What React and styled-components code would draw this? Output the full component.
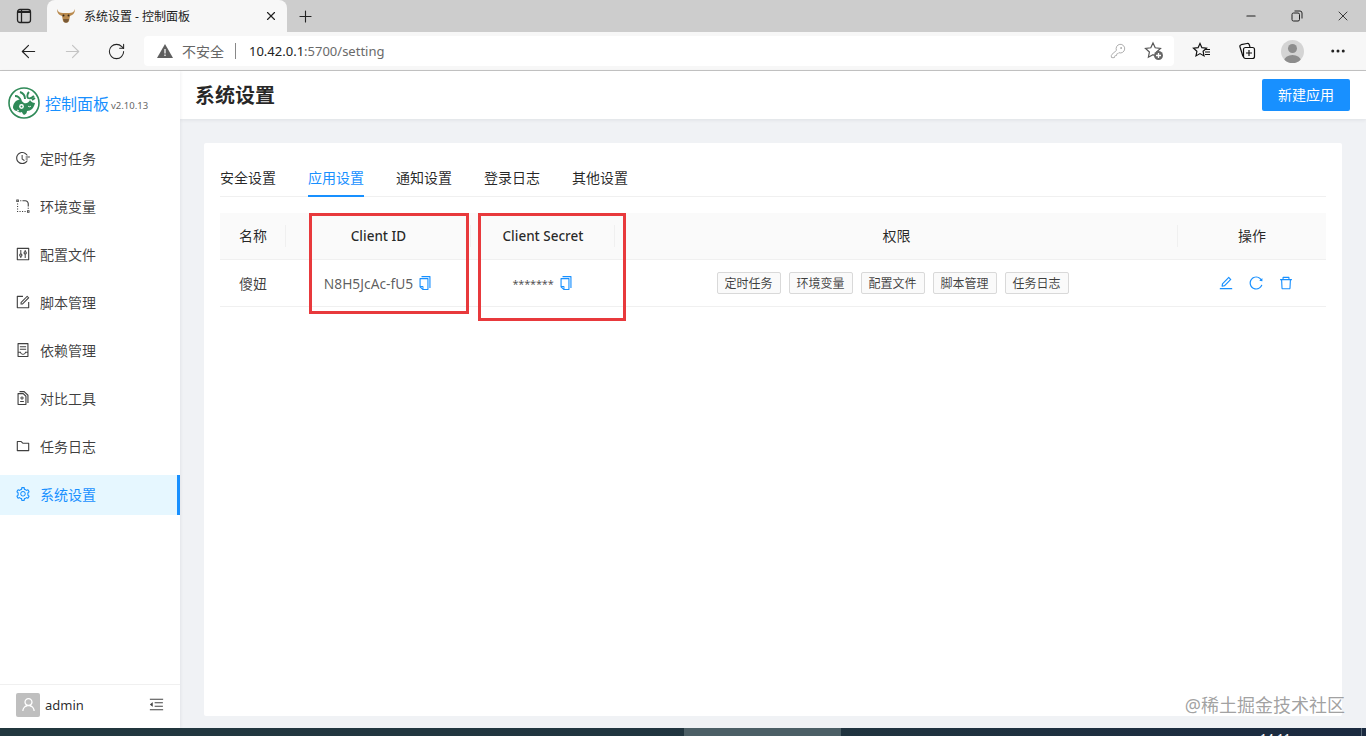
import styled, { createGlobalStyle } from 'styled-components'
import { ArrowLeft, ArrowRight, RotateCw, Minus, X, Plus, KeyRound, MoreHorizontal } from 'lucide-react'
import {
  AiOutlineFieldTime, AiOutlineRadiusSetting, AiOutlineControl, AiOutlineForm, AiOutlineContainer,
  AiOutlineDiff, AiOutlineFolder, AiOutlineSetting, AiOutlineCopy, AiOutlineEdit, AiOutlineReload,
  AiOutlineDelete, AiOutlineUser, AiOutlineMenuFold,
} from 'react-icons/ai'

const GlobalStyle = createGlobalStyle`
html,body{margin:0;padding:0;height:100%;overflow:hidden;}
body{font-family:"Noto Sans","Noto Sans CJK SC",sans-serif;color:rgba(0,0,0,0.85);font-size:14px;}
*{box-sizing:border-box;}
`

const menuItems = [
  { label: '定时任务', icon: AiOutlineFieldTime },
  { label: '环境变量', icon: AiOutlineRadiusSetting },
  { label: '配置文件', icon: AiOutlineControl },
  { label: '脚本管理', icon: AiOutlineForm },
  { label: '依赖管理', icon: AiOutlineContainer },
  { label: '对比工具', icon: AiOutlineDiff },
  { label: '任务日志', icon: AiOutlineFolder },
  { label: '系统设置', icon: AiOutlineSetting, active: true },
]
const tabs = ['安全设置', '应用设置', '通知设置', '登录日志', '其他设置']
const scopes = ['定时任务', '环境变量', '配置文件', '脚本管理', '任务日志']

const SidebarToggleIcon = () => (
  <svg width="16" height="16" viewBox="0 0 16 16">
    <rect x="1.500" y="1.500" width="13" height="13" rx="2.500" fill="none" stroke="#222" strokeWidth="1.300" />
    <path d="M2 4h12" stroke="#222" strokeWidth="2" />
    <path d="M5.500 2v12" stroke="#222" strokeWidth="1.300" />
  </svg>
)

const BullIcon = () => (
  <svg width="20" height="18" viewBox="0 0 20 18">
    <path d="M1 2c1 3 3 4 6 4h6c3 0 5-1 6-4 0 4-2 6-5 7l-1 5c-1 2-5 2-6 0L6 9C3 8 1 6 1 2z" fill="#b98a4e" />
    <path d="M7 12h6l-1 3c-1 1-3 1-4 0z" fill="#7a5a36" />
    <circle cx="7.500" cy="8.500" r="1" fill="#3a2a1a" />
    <circle cx="12.500" cy="8.500" r="1" fill="#3a2a1a" />
  </svg>
)

const LogoIcon = () => (
  <svg width="32" height="32" viewBox="0 0 32 32">
    <circle cx="16" cy="16" r="15" fill="#fff" stroke="#2f8a58" strokeWidth="1.600" />
    <path d="M5 21c0-4 2-7 5-8 3-1 4 2 6 3 3 1 5-1 6-3 1 2 3 3 5 3-1 5-4 8-8 8 0 2-1 3-3 4-1-1-2-2-2-3-2 1-4 0-5-1-2 0-3-1-4-3z" fill="#2f8a58" />
    <path d="M7 9c3 0 5 2 6 5M12 5c3 1 5 4 5 7M21 5c-2 2-2 5-1 6 2 1 4 0 6-2M24 13l3-2" fill="none" stroke="#2f8a58" strokeWidth="1.900" />
    <circle cx="13.500" cy="19.500" r="2.400" fill="#fff" />
    <circle cx="13.500" cy="19.500" r="1" fill="#2f8a58" />
    <path d="M20 19c1 1 2 1 3 0M9 23l2 1" stroke="#fff" strokeWidth="1" fill="none" />
  </svg>
)

const AddFavIcon = () => (
  <svg width="20" height="20" viewBox="0 0 20 20">
    <path d="M9 2l2.200 4.800 5.300.6-3.900 3.600 1 5.200L9 13.700l-4.600 2.500 1-5.200L1.500 7.400l5.300-.6z" fill="none" stroke="#555" strokeWidth="1.200" />
    <circle cx="14.500" cy="14.500" r="4.500" fill="#666" />
    <path d="M14.500 12v5M12 14.500h5" stroke="#fff" strokeWidth="1.300" />
  </svg>
)

const FavListIcon = () => (
  <svg width="20" height="20" viewBox="0 0 20 20">
    <path d="M8 2.500l1.900 4.200 4.600.5-3.400 3.100.9 4.600L8 12.600l-4 2.300.9-4.600L1.500 7.200l4.600-.5z" fill="none" stroke="#111" strokeWidth="1.200" />
    <path d="M13 8.500h5M13 11h5M13 13.500h5" stroke="#111" strokeWidth="1.200" />
  </svg>
)

const CollectionsIcon = () => (
  <svg width="20" height="20" viewBox="0 0 20 20">
    <path d="M6 15.500L3 6c-.3-1 .2-2 1.200-2.300L10 2.500c1-.2 1.800.2 2.200 1L13 6" fill="none" stroke="#111" strokeWidth="1.200" />
    <rect x="6.500" y="6.500" width="11" height="11" rx="2" fill="#f7f7f7" stroke="#111" strokeWidth="1.200" />
    <path d="M12 9v6M9 12h6" stroke="#111" strokeWidth="1.200" />
  </svg>
)

const RestoreIcon = () => (
  <svg width="12" height="12" viewBox="0 0 12 12">
    <rect x="1" y="3" width="7.500" height="8" rx="1.500" fill="none" stroke="#222" />
    <path d="M3.500 1h5.500A2 2 0 0 1 11 3v5.500" fill="none" stroke="#222" />
  </svg>
)

const WarnIcon = () => (
  <svg width="16" height="14" viewBox="0 0 16 14">
    <path d="M8 0l8 14H0z" fill="#5f5f5f" />
    <path d="M8 5v4.500M8 10.500v1.500" stroke="#f7f7f7" strokeWidth="1.300" />
  </svg>
)

const App = () => (
  <Page>
    <GlobalStyle />
    <TabStrip>
      <StripButton $width={47}><SidebarToggleIcon /></StripButton>
      <BrowserTab>
        <BullIcon />
        <TabTitle>系统设置 - 控制面板</TabTitle>
        <X size={14} color="#222" />
      </BrowserTab>
      <StripButton $width={36}><Plus size={19} strokeWidth={1.400} color="#222" /></StripButton>
      <WindowControls>
        <WindowButton><Minus size={14} color="#222" /></WindowButton>
        <WindowButton><RestoreIcon /></WindowButton>
        <WindowButton><X size={16} strokeWidth={1.300} color="#222" /></WindowButton>
      </WindowControls>
    </TabStrip>
    <Toolbar>
      <NavButton><ArrowLeft size={21} strokeWidth={1.300} color="#222" /></NavButton>
      <NavButton><ArrowRight size={21} strokeWidth={1.300} color="#c4c4c4" /></NavButton>
      <NavButton><RotateCw size={19} strokeWidth={1.300} color="#222" /></NavButton>
      <AddressBar>
        <WarnIcon />
        <Insecure>不安全</Insecure>
        <AddressDivider />
        <Url><b>10.42.0.1</b>:5700/setting</Url>
        <AddressTools>
          <KeyRound size={16} strokeWidth={1.200} color="#999" />
          <AddFavIcon />
        </AddressTools>
      </AddressBar>
      <BarTools>
        <FavListIcon />
        <CollectionsIcon />
        <Avatar><AvatarHead /><AvatarBody /></Avatar>
        <MoreHorizontal size={18} color="#222" />
      </BarTools>
    </Toolbar>
    <Body>
      <Sidebar>
        <Brand>
          <LogoIcon />
          <BrandName>控制面板</BrandName>
          <BrandVersion>v2.10.13</BrandVersion>
        </Brand>
        <Menu>
          {menuItems.map(({ label, icon: Icon, active }) => (
            <MenuItem key={label} $active={active}>
              <Icon size={16} />
              <span>{label}</span>
            </MenuItem>
          ))}
        </Menu>
        <SidebarFooter>
          <UserSquare><AiOutlineUser size={17} color="#fff" /></UserSquare>
          <UserName>admin</UserName>
          <AiOutlineMenuFold size={17} color="#444" />
        </SidebarFooter>
      </Sidebar>
      <Main>
        <PageHeader>
          <PageTitle>系统设置</PageTitle>
          <PrimaryButton>新建应用</PrimaryButton>
        </PageHeader>
        <ContentArea>
          <Card>
            <TabList>
              {tabs.map((tab) => (
                <TabItem key={tab} $active={tab === '应用设置'}>{tab}</TabItem>
              ))}
            </TabList>
            <TableWrap>
              <HeadRow>
                <HeadCell>名称</HeadCell>
                <HeadCell $latin>Client ID</HeadCell>
                <HeadCell $latin>Client Secret</HeadCell>
                <HeadCell>权限</HeadCell>
                <HeadCell $last>操作</HeadCell>
              </HeadRow>
              <BodyRow>
                <BodyCell>傻妞</BodyCell>
                <BodyCell><ClientId>N8H5JcAc-fU5</ClientId><CopyMark><AiOutlineCopy size={16} /></CopyMark></BodyCell>
                <BodyCell><Stars>*******</Stars><CopyMark><AiOutlineCopy size={16} /></CopyMark></BodyCell>
                <BodyCell>
                  <TagList>
                    {scopes.map((s) => <Tag key={s}>{s}</Tag>)}
                  </TagList>
                </BodyCell>
                <BodyCell>
                  <Actions>
                    <AiOutlineEdit size={16} />
                    <AiOutlineReload size={16} />
                    <AiOutlineDelete size={16} />
                  </Actions>
                </BodyCell>
              </BodyRow>
              <RedBox $left={89} $width={160} $height={101} />
              <RedBox $left={258} $width={148} $height={108} />
            </TableWrap>
          </Card>
          <Watermark>@稀土掘金技术社区</Watermark>
        </ContentArea>
      </Main>
    </Body>
    <Taskbar>
      <TaskbarActive />
      <TaskbarClock>14:11</TaskbarClock>
      <TaskbarEdge />
    </Taskbar>
  </Page>
)

const Page = styled.div`
  width: 1366px;
  height: 736px;
  display: flex;
  flex-direction: column;
  overflow: hidden;
  background: #fff;
`
const TabStrip = styled.div`
  height: 32px;
  flex: none;
  display: flex;
  align-items: stretch;
  background: #cdcdcd;
`
const StripButton = styled.div`
  width: ${(p) => p.$width}px;
  display: flex;
  align-items: center;
  justify-content: center;
`
const BrowserTab = styled.div`
  width: 240px;
  display: flex;
  align-items: center;
  padding: 0 9px;
  background: #f7f7f7;
  border-radius: 8px 8px 0 0;
`
const TabTitle = styled.span`
  flex: 1;
  margin-left: 8px;
  font-size: 12px;
  color: #222;
`
const WindowControls = styled.div`
  margin-left: auto;
  display: flex;
`
const WindowButton = styled.div`
  width: 46px;
  display: flex;
  align-items: center;
  justify-content: center;
`
const Toolbar = styled.div`
  height: 39px;
  flex: none;
  display: flex;
  align-items: center;
  padding-left: 6px;
  background: #f7f7f7;
  border-bottom: 1px solid #c4c4c4;
`
const NavButton = styled.div`
  width: 44px;
  display: flex;
  justify-content: center;
`
const AddressBar = styled.div`
  width: 1030px;
  height: 30px;
  margin-left: 6px;
  display: flex;
  align-items: center;
  padding: 0 10px 0 13px;
  background: #fff;
  border-radius: 4px;
`
const Insecure = styled.span`
  margin-left: 9px;
  font-size: 14px;
  color: #666;
`
const AddressDivider = styled.span`
  width: 1px;
  height: 16px;
  margin: 0 13px 0 11px;
  background: #888;
`
const Url = styled.span`
  font-size: 13px;
  color: #6a6a6a;
  b {
    font-weight: 400;
    color: #222;
  }
`
const AddressTools = styled.div`
  margin-left: auto;
  display: flex;
  align-items: center;
  gap: 18px;
`
const BarTools = styled.div`
  flex: 1;
  display: flex;
  align-items: center;
  justify-content: space-between;
  padding: 0 19px 0 18px;
`
const Avatar = styled.div`
  position: relative;
  width: 23px;
  height: 23px;
  border-radius: 50%;
  background: #d4d4d4;
  overflow: hidden;
`
const AvatarHead = styled.div`
  position: absolute;
  left: 7px;
  top: 4px;
  width: 9px;
  height: 9px;
  border-radius: 50%;
  background: #8d8d8d;
`
const AvatarBody = styled.div`
  position: absolute;
  left: 3px;
  top: 15px;
  width: 17px;
  height: 12px;
  border-radius: 50%;
  background: #8d8d8d;
`
const Body = styled.div`
  flex: 1;
  min-height: 0;
  display: flex;
`
const Sidebar = styled.aside`
  width: 180px;
  flex: none;
  display: flex;
  flex-direction: column;
  background: #fff;
  box-shadow: 1px 0 3px rgba(0, 21, 41, 0.06);
  z-index: 2;
`
const Brand = styled.div`
  height: 64px;
  flex: none;
  display: flex;
  align-items: center;
  padding: 0 0 0 8px;
`
const BrandName = styled.span`
  margin-left: 5px;
  font-size: 16px;
  color: #1890ff;
`
const BrandVersion = styled.span`
  margin: 5px 0 0 2px;
  font-size: 9.5px;
  color: #666;
`
const Menu = styled.nav`
  flex: 1;
  display: flex;
  flex-direction: column;
  gap: 8px;
  padding-top: 4px;
`
const MenuItem = styled.div`
  height: 40px;
  display: flex;
  align-items: center;
  gap: 9px;
  padding: 0 0 2px 15px;
  font-size: 14px;
  color: ${(p) => (p.$active ? '#1890ff' : 'rgba(0,0,0,0.75)')};
  background: ${(p) => (p.$active ? '#e6f7ff' : 'transparent')};
  border-right: ${(p) => (p.$active ? '3px solid #1890ff' : '0')};
`
const SidebarFooter = styled.div`
  height: 44px;
  flex: none;
  display: flex;
  align-items: center;
  padding: 0 15px 4px 16px;
  border-top: 1px solid #f0f0f0;
`
const UserSquare = styled.div`
  width: 24px;
  height: 24px;
  display: flex;
  align-items: center;
  justify-content: center;
  background: #bfbfbf;
  border-radius: 2px;
`
const UserName = styled.span`
  flex: 1;
  margin-left: 5px;
  font-size: 13px;
`
const Main = styled.main`
  flex: 1;
  min-width: 0;
  display: flex;
  flex-direction: column;
  background: #f0f2f5;
`
const PageHeader = styled.header`
  height: 48px;
  flex: none;
  display: flex;
  align-items: center;
  justify-content: space-between;
  padding: 0 16px 0 15px;
  background: #fff;
  box-shadow: 0 1px 4px rgba(0, 21, 41, 0.08);
`
const PageTitle = styled.h1`
  margin: 0 0 2px;
  font-size: 20px;
  font-weight: 600;
  color: rgba(0, 0, 0, 0.85);
`
const PrimaryButton = styled.button`
  width: 88px;
  height: 32px;
  padding: 0 0 2px;
  border: 0;
  border-radius: 2px;
  background: #1890ff;
  color: #fff;
  font: inherit;
  font-size: 14px;
`
const ContentArea = styled.div`
  position: relative;
  flex: 1;
  min-height: 0;
  padding: 24px 24px 12px;
`
const Card = styled.section`
  height: 100%;
  padding: 16px 16px 0;
  background: #fff;
  border-radius: 2px;
`
const TabList = styled.div`
  height: 38px;
  display: flex;
  gap: 32px;
  border-bottom: 1px solid #f0f0f0;
`
const TabItem = styled.div`
  height: 38px;
  padding-top: 8px;
  font-size: 14px;
  color: ${(p) => (p.$active ? '#1890ff' : 'rgba(0,0,0,0.85)')};
  border-bottom: 2px solid ${(p) => (p.$active ? '#1890ff' : 'transparent')};
`
const TableWrap = styled.div`
  position: relative;
  margin-top: 16px;
`
const columns = 'grid-template-columns: 66px 185px 144px 563px 148px;'
const HeadRow = styled.div`
  display: grid;
  ${columns}
  height: 47px;
  background: #fafafa;
  border-bottom: 1px solid #f0f0f0;
`
const HeadCell = styled.div`
  position: relative;
  display: flex;
  align-items: center;
  justify-content: center;
  padding-bottom: ${(p) => (p.$latin ? '0' : '2px')};
  font-size: ${(p) => (p.$latin ? '13.5px' : '14px')};
  font-weight: ${(p) => (p.$latin ? 500 : 400)};
  &::after {
    content: '';
    display: ${(p) => (p.$last ? 'none' : 'block')};
    position: absolute;
    right: 0;
    top: 12px;
    bottom: 12px;
    width: 1px;
    background: #f0f0f0;
  }
`
const BodyRow = styled.div`
  display: grid;
  ${columns}
  height: 47px;
  border-bottom: 1px solid #f0f0f0;
`
const BodyCell = styled.div`
  display: flex;
  align-items: center;
  justify-content: center;
  font-size: 14px;
  color: rgba(0, 0, 0, 0.75);
`
const ClientId = styled.span`
  font-size: 13.8px;
  color: rgba(0, 0, 0, 0.65);
`
const CopyMark = styled.span`
  display: inline-flex;
  margin-left: 4px;
  color: #1890ff;
`
const Stars = styled.span`
  font-size: 11px;
  color: rgba(0, 0, 0, 0.7);
  letter-spacing: -0.2px;
`
const TagList = styled.div`
  display: flex;
  gap: 8px;
  margin-right: 8px;
`
const Tag = styled.span`
  width: 64px;
  height: 22px;
  display: flex;
  align-items: center;
  justify-content: center;
  font-size: 12px;
  color: rgba(0, 0, 0, 0.75);
  background: #fafafa;
  border: 1px solid #d9d9d9;
  border-radius: 2px;
`
const Actions = styled.div`
  display: flex;
  gap: 14px;
  margin-left: 8px;
  color: #1890ff;
`
const RedBox = styled.div`
  position: absolute;
  top: 0;
  left: ${(p) => p.$left}px;
  width: ${(p) => p.$width}px;
  height: ${(p) => p.$height}px;
  border: 3px solid #e8393c;
`
const Watermark = styled.div`
  position: absolute;
  right: 21px;
  bottom: 11px;
  font-size: 18px;
  color: rgba(120, 120, 120, 0.7);
`
const Taskbar = styled.footer`
  position: relative;
  height: 8px;
  flex: none;
  background: linear-gradient(90deg, #22383f 0%, #20343f 60%, #1b2a40 100%);
  overflow: hidden;
`
const TaskbarActive = styled.div`
  position: absolute;
  left: 684px;
  top: 0;
  width: 157px;
  height: 8px;
  background: #4c5f66;
`
const TaskbarClock = styled.div`
  position: absolute;
  left: 1260px;
  top: 2px;
  font-size: 12px;
  color: #fff;
`
const TaskbarEdge = styled.div`
  position: absolute;
  left: 1361px;
  top: 0;
  width: 1px;
  height: 8px;
  background: #5a6a78;
`

export default App
